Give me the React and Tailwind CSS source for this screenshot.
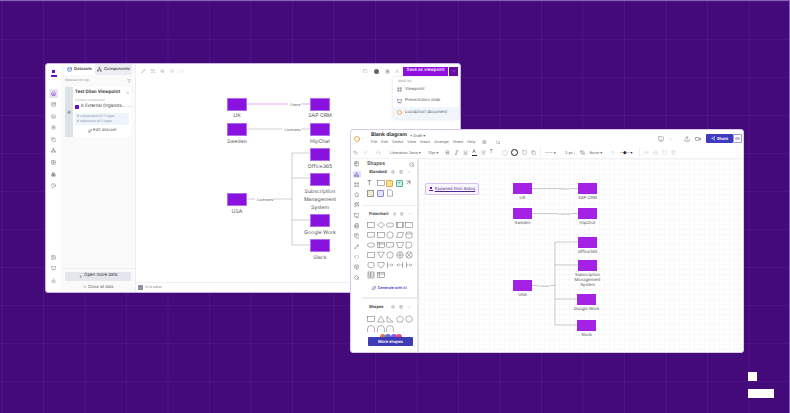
import React from "react";
import {
  Database, Network, Pencil, Expand, ZoomIn, ZoomOut, Circle, Filter, Home, Settings, Layers, Copy, Boxes, Grid2x2,
  Box, Clock, Image, Presentation, Download, X, Plus, ChevronDown, Eye, Share2, Undo2, Redo2, PaintBucket, Search,
  Table2, Shapes, Square, Star, Cable, Monitor, Printer, Wand2, Code, Bold, Italic, Underline, AlignCenter, ArrowUpRight,
  Trash2, Link2, Video, Upload, Lock, Cloud, FileText, GitBranch, Sparkles, Frame,
} from "lucide-react";

const Node1 = ({ x, y, label, lines }) => (
  <>
    <div className="absolute h-[13px] w-[20px] border border-[#b06cf0] bg-[#8a12de]" style={{ left: x, top: y }} />
    <div className="absolute w-[60px] text-center text-[5.2px] leading-[8.2px] text-[#555]" style={{ left: x - 20, top: y + 14.5 }}>
      {(lines || [label]).map((t) => <div key={t}>{t}</div>)}
    </div>
  </>
);

const Node2 = ({ x, y, label, lines }) => (
  <>
    <div className="absolute h-[11px] w-[19px] bg-[#a322e6]" style={{ left: x, top: y }} />
    <div className="absolute w-[50px] text-center text-[4.2px] leading-[5.4px] text-[#555]" style={{ left: x - 15.5, top: y + 12.5 }}>
      {(lines || [label]).map((t) => <div key={t}>{t}</div>)}
    </div>
  </>
);

const Rail = ({ icon: I, active }) => (
  <div className={`flex h-[9px] w-[9px] items-center justify-center rounded-[1px] ${active ? "bg-[#e9e5f0]" : ""}`}>
    <I size={5} strokeWidth={2} className={active ? "text-[#6d0fc0]" : "text-[#777]"} />
  </div>
);

const Section = ({ title }) => (
  <div className="flex h-[6px] items-center gap-[4px] pl-[7px] pr-[6px]">
    <span className="flex-1 text-[4px] font-bold text-[#444]">{title}</span>
    <Settings size={4} className="text-[#888]" />
    <Trash2 size={4} className="text-[#888]" />
    <ChevronDown size={4} className="text-[#888]" />
  </div>
);

const Sh = ({ d }) => (
  <svg width="8" height="8" viewBox="0 0 8 8" fill="none" stroke="#666" strokeWidth="0.5">{d}</svg>
);
const rect = <rect x="0.5" y="1.5" width="7" height="5" />;
const rect2 = <><rect x="0.5" y="1.5" width="7" height="5" /><path d="M1.5 1.5v5M6.5 1.5v5" /></>;
const wave = <path d="M.5 1.5h7v4.4C5.5 5 3 7.4.5 5.9Z" />;
const flag = <><rect x="0.5" y="1.5" width="7" height="5" /><path d="M.5 3h7M2.5 1.5v5" /></>;
const dia = <path d="M4 1.2 7.6 4 4 6.8.4 4Z" />;
const pill = <rect x="0.5" y="2" width="7" height="4" rx="2" />;
const circ = <circle cx="4" cy="4" r="3.2" />;
const para = <path d="M2 1.5h5.5L6 6.5H.5Z" />;
const cyl = <><path d="M1 2v4.4c0 1 6 1 6 0V2" /><ellipse cx="4" cy="2" rx="3" ry="1" /></>;
const trap = <path d="M.5 1.5h7L6 6.5H2Z" />;
const dee = <path d="M1 1h3a3 3 0 0 1 0 6H1Z" />;
const cut = <path d="M.5 1.5h7v5h-7Z" />;
const tri = <path d="M4 1.2 7.5 7H.5Z" />;
const trid = <path d="M.5 1.2h7L4 7Z" />;
const rtri = <path d="M1 1.5V7h6Z" />;
const pent = <path d="M4 .8 7.5 3.4 6.2 7H1.8L.5 3.4Z" />;
const shield = <path d="M1 1.5h6v3L4 7 1 4.5Z" />;
const cross = <><circle cx="4" cy="4" r="3.2" /><path d="M4 .8v6.4M.8 4h6.4" /></>;
const xc = <><circle cx="4" cy="4" r="3.2" /><path d="M1.8 1.8l4.4 4.4M6.2 1.8 1.8 6.2" /></>;
const brkL = <path d="M1.5 1v6M1.5 4h2M5 2.5v3M6.5 3v2" />;
const brkR = <path d="M6.5 1v6M6.5 4h-2M3 2.5v3M1.5 3v2" />;
const tbl = <><rect x="1" y="1" width="6" height="6" /><path d="M1 3h6M1 5h6M3.5 1v6" /></>;
const arch = <path d="M.5 7V4a3.5 3.5 0 0 1 7 0v3" />;
const round = <rect x="1" y="1.5" width="6" height="5" rx="1.6" />;

const ShapeGrid = ({ items }) => (
  <div className="grid grid-cols-[repeat(5,9.6px)] gap-y-[2px] pl-[5px]">
    {items.map((d, i) => <Sh key={i} d={d} />)}
  </div>
);

export default function App() {
  return (
    <div className="relative h-[413px] w-[790px] overflow-hidden border-t border-r border-[#8a62b4] bg-[#450a7a] bg-[linear-gradient(to_right,rgba(160,90,230,0.11)_1px,transparent_1px),linear-gradient(to_bottom,rgba(160,90,230,0.09)_1px,transparent_1px)] bg-[size:41.5px_38px] bg-[position:1.5px_0px] font-['Inter',sans-serif] [text-rendering:geometricPrecision]">
      {/* Window 1 */}
      <div className="absolute left-[45px] top-[62px] flex h-[230px] w-[416px] rounded-[3px] border border-[#c9b2e2] bg-white">
        <div className="flex w-[15px] shrink-0 flex-col items-center pt-[6px]">
          <div className="flex flex-col items-center gap-[1.5px]">
            <div className="h-[3px] w-[2.5px] bg-[#6d0fc0]" />
            <div className="h-[2px] w-[6px] bg-[#6d0fc0]" />
          </div>
          <div className="mt-[12px] flex flex-col items-center gap-[2.6px]">
            <Rail icon={Home} active />
            <Rail icon={Database} />
            <Rail icon={Layers} />
            <Rail icon={Settings} />
            <Rail icon={Copy} />
            <Rail icon={Network} />
            <Rail icon={Grid2x2} />
            <Rail icon={Boxes} />
            <Rail icon={Clock} />
          </div>
          <div className="mt-auto mb-[7px] flex flex-col items-center gap-[2.6px]">
            <Rail icon={Image} />
            <Rail icon={Presentation} />
            <Rail icon={Download} />
          </div>
        </div>
        <div className="flex w-[75px] shrink-0 flex-col border-r border-[#eee] bg-[#fafafa]">
          <div className="flex h-[11px] items-center pl-[3px]">
            <div className="flex h-[11px] w-[31px] items-center justify-center gap-[2px] rounded-[1px] bg-white text-[4.2px] font-semibold text-[#444]">
              <Database size={5} className="text-[#2457b8]" /><span className="pt-[1px]">Datasets</span>
            </div>
            <div className="flex h-[11px] w-[37px] items-center justify-center gap-[2px] rounded-[1px] bg-[#eceef1] text-[4.2px] font-semibold text-[#555]">
              <Network size={5} className="text-[#555]" /><span className="pt-[1px]">Components</span>
            </div>
          </div>
          <div className="flex items-center justify-between px-[4px] pt-[2px] text-[3.5px] leading-[7px] text-[#999]">
            <span>Newest on top</span>
            <Filter size={4} className="text-[#888]" />
          </div>
          <div className="mx-[4px] mt-[3px] flex h-[50px] rounded-[1px] bg-white">
            <div className="flex w-[8px] shrink-0 items-center justify-center bg-[#dde2e8]">
              <Eye size={4.5} className="text-[#5a6472]" />
            </div>
            <div className="flex min-w-0 flex-1 flex-col pl-[2px] pr-[2px] pt-[2.5px]">
              <div className="flex items-center justify-between text-[4.5px] font-bold leading-[6px] text-[#444]">
                <span className="whitespace-nowrap">Test Dilan Viewpoint</span>
                <X size={3.5} className="text-[#666]" />
              </div>
              <div className="mt-[2px] whitespace-nowrap text-[3.2px] leading-[4px] text-[#aaa]">Contact component</div>
              <div className="mt-[2px] flex items-center gap-[2px] text-[4.4px] leading-[6px] text-[#444]">
                <div className="h-[4px] w-[4px] shrink-0 bg-[#6d0fc0]" />
                <span className="flex-1 whitespace-nowrap">6 External Organiza...</span>
                <ChevronDown size={3.5} className="shrink-0 text-[#666]" />
              </div>
              <div className="mt-[3px] h-[12px] bg-[#eef4fb] pl-[2px] pt-[1.5px] text-[3.2px] leading-[4.6px] text-[#7a8ca2]">
                <div className="whitespace-nowrap">6 components of 7 types</div>
                <div className="whitespace-nowrap">6 references of 2 types</div>
              </div>
              <div className="mt-[3px] flex items-center justify-center gap-[1.5px] text-[4.2px] leading-[6px] text-[#555]">
                <GitBranch size={4} />Edit dataset
              </div>
            </div>
          </div>
          <div className="mt-auto border-t border-[#f0f0f0] px-[4px] pt-[3px]">
            <div className="flex h-[9px] items-center justify-center gap-[2px] rounded-[1px] bg-[#e3e6ec] text-[4.4px] text-[#444]">
              <Plus size={3.5} />Open more data
            </div>
            <div className="flex h-[11px] items-center justify-center gap-[2px] text-[4px] text-[#555]">
              <X size={3.5} />Close all data
            </div>
          </div>
        </div>
        <div className="relative min-w-0 flex-1">
          <div className="flex h-[14px] items-center gap-[5px] pl-[5px] pr-[2px]">
            <Pencil size={4.5} className="text-[#999]" />
            <Expand size={4.5} className="text-[#999]" />
            <ZoomIn size={4.5} className="text-[#aaa]" />
            <ZoomOut size={4.5} className="text-[#bbb]" />
            <Circle size={4.5} className="text-[#ddd]" />
            <div className="flex-1" />
            <Square size={4.5} className="text-[#999]" />
            <div className="ml-[1px] h-[5px] w-[5px] rounded-full bg-[#666]" />
            <Settings size={5} className="ml-[1px] text-[#666]" />
            <Download size={4.5} className="mr-[-1px] text-[#aaa]" />
            <div className="flex h-[9px] items-center">
              <div className="flex h-[9px] w-[45px] items-center justify-center bg-[#8f0fdc] pt-[1px] text-[4.4px] font-medium text-white">Save as viewpoint</div>
              <div className="ml-[1px] flex h-[9px] w-[9px] items-center justify-center bg-[#6a0d9e]"><ChevronDown size={4} className="text-white" /></div>
            </div>
          </div>

          {/* diagram */}
          <svg className="absolute left-0 top-0" width="325" height="228" viewBox="0 0 325 228" fill="none">
            <path d="M111 40H152M165 40H174" stroke="#c48cf0" strokeWidth="0.7" />
            <path d="M111 65H146M165 65H174M111 135H119M137 135H156M156 89V181M156 89H174M156 114H174M156 156H174M156 181H174" stroke="#bbb" strokeWidth="0.7" />
          </svg>
          <span className="absolute left-[154px] top-[37.5px] text-[3.8px] leading-[5px] text-[#666]">Owns</span>
          <span className="absolute left-[148.5px] top-[62.5px] text-[3.8px] leading-[5px] text-[#666]">Licenses</span>
          <span className="absolute left-[121px] top-[132.5px] text-[3.8px] leading-[5px] text-[#666]">Licenses</span>
          <Node1 x={91} y={33.5} label="UK" />
          <Node1 x={174} y={33.5} label="SAP CRM" />
          <Node1 x={91} y={59} label="Sweden" />
          <Node1 x={174} y={59} label="HipChat" />
          <Node1 x={91} y={129} label="USA" />
          <Node1 x={174} y={84} label="Office365" />
          <Node1 x={174} y={109} lines={["Subscription", "Management", "System"]} />
          <Node1 x={174} y={150} label="Google Work" />
          <Node1 x={174} y={175} label="Slack" />

          {/* Dropdown */}
          <div className="absolute left-[257px] top-[13px] h-[42px] w-[66px] rounded-[1px] bg-white shadow-[0_0_3px_rgba(0,0,0,0.15)]">
            <div className="px-[5px] pt-[1px] text-[3.2px] leading-[6px] text-[#888]">SAVE AS</div>
            <div className="flex h-[11.5px] items-center gap-[3px] px-[4px] text-[4.2px] text-[#555]"><Frame size={5} className="text-[#33507a]" />Viewpoint</div>
            <div className="flex h-[11.5px] items-center gap-[3px] px-[4px] text-[4.2px] text-[#555]"><Presentation size={5} className="text-[#33507a]" />Presentation slide</div>
            <div className="flex h-[11.5px] items-center gap-[3px] bg-[#f1f6fc] px-[4px] text-[4.2px] text-[#555]"><Circle size={5} strokeWidth={3} className="text-[#f08a24]" />Lucidchart document</div>
          </div>

          <div className="absolute bottom-0 left-0 right-0 flex h-[10px] items-center gap-[2px] border-t border-[#f0f0f0] pl-[2px] text-[3.4px] text-[#888]">
            <div className="h-[5px] w-[5px] rounded-[0.5px] bg-[#8b93a0]" />Grid editor
          </div>
        </div>
      </div>

      {/* Window 2 */}
      <div className="absolute left-[350px] top-[128px] flex h-[224px] w-[394px] flex-col rounded-[3px] border border-[#d9cbe8] bg-white">
        <div className="flex h-[17px] shrink-0 items-center pl-[3px] pr-[1px]">
          <Circle size={6} strokeWidth={3} className="text-[#f08a24]" />
          <ChevronDown size={3} className="ml-[1px] text-[#888]" />
          <div className="ml-[7px] flex flex-col">
            <div className="flex items-center gap-[3px]">
              <span className="text-[5.2px] font-bold leading-[7px] text-[#333]">Blank diagram</span>
              <span className="text-[3.8px] text-[#555]">• Draft ▾</span>
            </div>
            <div className="flex items-center gap-[4px] text-[3.8px] leading-[6px] text-[#666]">
              <span>File</span><span>Edit</span><span>Select</span><span>View</span><span>Insert</span><span>Arrange</span><span>Share</span><span>Help</span>
              <FileText size={4.5} className="ml-[3px] text-[#777]" />
              <Cloud size={4.5} className="ml-[5px] text-[#777]" />
            </div>
          </div>
          <div className="flex-1" />
          <Monitor size={6} className="text-[#888]" />
          <ChevronDown size={4} className="ml-[5px] text-[#888]" />
          <Upload size={6} className="ml-[11px] text-[#666]" />
          <Video size={6} className="ml-[5px] text-[#666]" />
          <div className="ml-[5px] flex h-[9px] w-[27px] items-center justify-center gap-[1.5px] rounded-[1px] bg-[#3f3bc0] text-[4px] font-semibold text-white">
            <Share2 size={4.5} />Share
          </div>
          <div className="flex h-[9px] w-[9px] items-center justify-center rounded-[1px] border border-[#9d9be0]"><Link2 size={5} className="text-[#3f3bc0]" /></div>
        </div>
        <div className="flex h-[12px] shrink-0 items-center whitespace-nowrap border-b border-[#f2f2f2] pl-[1.5px] text-[3.8px] text-[#666]">
          <Undo2 size={5} className="text-[#777]" />
          <Redo2 size={5} className="ml-[5px] text-[#ccc]" />
          <PaintBucket size={5} className="ml-[8px] text-[#ccc]" />
          <span className="ml-[9.5px] w-[35px]">Liberation Sans ▾</span>
          <span className="ml-[3px] w-[13px]">10pt ▾</span>
          <Bold size={5} className="ml-[3.5px] text-[#555]" />
          <Italic size={5} className="ml-[4px] text-[#555]" />
          <Underline size={5} className="ml-[4px] text-[#555]" />
          <span className="ml-[4px] w-[5px] border-b border-[#222] text-center text-[5px] leading-[5px]">A</span>
          <AlignCenter size={5} className="ml-[4px] text-[#777]" />
          <span className="ml-[4px] w-[5px] text-[5px]">T</span>
          <div className="ml-[7.5px] h-[6px] w-[6px] rounded-full border border-[#ddd]" />
          <div className="ml-[2.5px] h-[7px] w-[7px] rounded-full border-[1.5px] border-[#222]" />
          <Square size={5} className="ml-[4px] text-[#888]" />
          <Copy size={5} className="ml-[4px] text-[#888]" />
          <div className="ml-[4px] h-[9px] w-px bg-[#eee]" />
          <span className="ml-[4.5px] w-[12px]">—— ▾</span>
          <span className="ml-[8px] w-[11px]">2 px ⁞</span>
          <Cable size={5} className="ml-[3.5px] text-[#888]" />
          <span className="ml-[5px] w-[13px]">None ▾</span>
          <ArrowUpRight size={5} className="ml-[7px] text-[#ccc]" />
          <span className="ml-[5.5px] w-[14px] text-[#222]">─◆─ ▾</span>
          <div className="ml-[5px] h-[9px] w-px bg-[#eee]" />
          <Link2 size={5} className="ml-[4px] text-[#ccc]" />
          <Lock size={5} className="ml-[4px] text-[#ccc]" />
          <Square size={5} className="ml-[4px] text-[#ccc]" />
          <Trash2 size={5} className="ml-[4px] text-[#ccc]" />
        </div>
        <div className="flex min-h-0 flex-1">
          <div className="flex w-[11px] shrink-0 flex-col items-center gap-[3.3px] pt-[1.5px]">
            {[Table2, Shapes, Frame, Star, Wand2, Monitor, Printer, Copy, Pencil, Code, Box, Search].map((I, i) => (
              <div key={i} className={`flex h-[7px] w-[8px] items-center justify-center rounded-[1px] ${i === 1 ? "bg-[#e4e1fa]" : ""}`}>
                <I size={5.5} className={i === 1 ? "text-[#3f3bc0]" : "text-[#666]"} />
              </div>
            ))}
          </div>
          <div className="relative flex w-[57px] shrink-0 flex-col border-r-[2px] border-[#e6e6e6] pt-[2px]">
            <div className="flex h-[7px] items-center justify-between pl-[5px] pr-[3px]">
              <span className="text-[5px] font-semibold text-[#444]">Shapes</span>
              <Search size={5.5} className="text-[#666]" />
            </div>
            <div className="mt-[1px]"><Section title="Standard" /></div>
            <div className="mt-[4px] grid grid-cols-[repeat(5,9.6px)] gap-y-[2px] pl-[5px]">
              <span className="text-[7px] leading-[8px] text-[#666]">T</span>
              <Sh d={rect} />
              <div className="mt-[0.5px] h-[7px] w-[7px] rounded-[1px] border-[0.5px] border-[#d8b040] bg-[#f9e090]" />
              <div className="mt-[0.5px] flex h-[7px] w-[7px] items-center justify-center rounded-[1px] border-[0.5px] border-[#50b0a0] bg-[#c8efe6] text-[4px] leading-none text-[#357]">+</div>
              <ArrowUpRight size={7} className="text-[#555]" />
              <div className="mt-[0.5px] h-[7px] w-[7px] border-[0.5px] border-[#999] bg-[#f3e8d0]" />
              <div className="mt-[0.5px] h-[7px] w-[7px] rounded-[1px] border-[0.5px] border-[#8a86e8] bg-[#e6e4fb]" />
              <Sh d={<path d="M1.5.8h3.4L6.5 2.4v4.8h-5Z" />} />
            </div>
            <div className="mt-[8px] border-t border-[#eee] pt-[5px]"><Section title="Flowchart" /></div>
            <div className="mt-[4px]">
              <ShapeGrid items={[rect, dia, pill, rect2, rect, wave, rect, circ, para, cyl, pill, flag, wave, trap, dee, cut, trid, circ, cross, xc, round, shield, brkL, brkR, brkL, tbl, flag]} />
            </div>
            <div className="mt-[6.5px] flex items-center justify-center gap-[1.5px] text-[3.6px] font-semibold leading-[5px] text-[#4744c8]">
              <Sparkles size={4} />Generate with AI
            </div>
            <div className="mt-[6px] border-t-[2px] border-[#eee] pt-[5px]"><Section title="Shapes" /></div>
            <div className="mt-[5px]">
              <ShapeGrid items={[rect, tri, rtri, pent, circ, arch, arch, arch]} />
            </div>
            <div className="absolute bottom-[6px] left-[6px] h-[13px] w-[45px]">
              <div className="h-[4px] bg-white pl-[11px]">
                <svg width="24" height="4" viewBox="0 0 24 4"><path d="M1 4a3 3 0 0 1 6 0" fill="#e8734a" /><path d="M6 4a3 3 0 0 1 6 0" fill="#4a7be8" /><path d="M12 4a3 3 0 0 1 6 0" fill="#a04ae8" /><path d="M17 4a3 3 0 0 1 6 0" fill="#e84a7b" /></svg>
              </div>
              <div className="flex h-[9px] items-center justify-center rounded-[1px] bg-[#3f3bb5] text-[4px] font-semibold text-white">More shapes</div>
            </div>
          </div>
          <div className="relative min-w-0 flex-1 bg-[linear-gradient(to_right,#f8f8f8_1px,transparent_1px),linear-gradient(to_bottom,#f8f8f8_1px,transparent_1px)] bg-[size:5px_5px]">
            <div className="absolute left-[6px] top-[24px] flex h-[12px] w-[54px] items-center justify-center gap-[2px] rounded-[2px] border border-[#d5c0f2] bg-[#f9f5ff] text-[4px] text-[#4a2a90] underline">
              <span className="flex flex-col items-center gap-[0.5px] no-underline">
                <span className="h-[2px] w-[1.5px] bg-[#6d0fc0]" />
                <span className="h-[1px] w-[4px] bg-[#6d0fc0]" />
              </span>
              Spawned from Ardoq
            </div>
            <svg className="absolute left-0 top-0" width="320" height="190" viewBox="0 0 320 190" fill="none">
              <path d="M113 29.5H159M113 54.5H159M113 126.5H136M136 83V166M136 83H159M136 106H159M136 140H158M136 166H158" stroke="#999" strokeWidth="0.5" />
            </svg>
            <span className="absolute left-[142.5px] top-[27.5px] bg-white text-[3px] leading-[4px] text-[#999]">Owns</span>
            <span className="absolute left-[139px] top-[52.5px] bg-white text-[3px] leading-[4px] text-[#999]">Licenses</span>
            <span className="absolute left-[118px] top-[124.5px] bg-white text-[3px] leading-[4px] text-[#999]">Licenses</span>
            <Node2 x={94} y={24} label="UK" />
            <Node2 x={159} y={24} label="SAP CRM" />
            <Node2 x={94} y={49} label="Sweden" />
            <Node2 x={159} y={49} label="HipChat" />
            <Node2 x={94} y={121} label="USA" />
            <Node2 x={159} y={78} label="Office365" />
            <Node2 x={159} y={101} lines={["Subscription", "Management", "System"]} />
            <Node2 x={158} y={135} label="Google Work" />
            <Node2 x={158} y={161} label="Slack" />
          </div>
        </div>
      </div>

      {/* Logo */}
      <div className="absolute left-[748px] top-[371px] h-[8.5px] w-[9px] bg-white" />
      <div className="absolute left-[748px] top-[388px] h-[9px] w-[26px] bg-white" />
    </div>
  );
}
